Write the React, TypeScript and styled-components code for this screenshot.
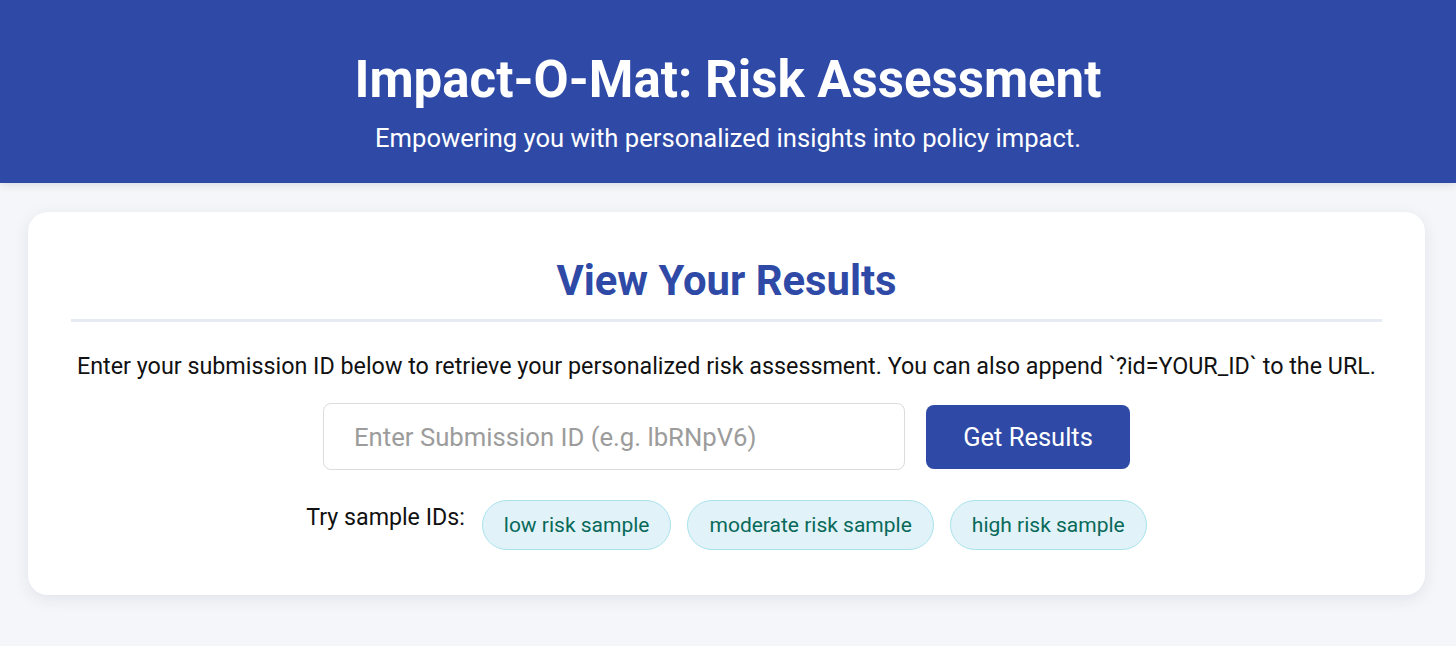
import React from "react";
import styled, { createGlobalStyle } from "styled-components";

const Global = createGlobalStyle`
  html, body { margin: 0; padding: 0; }
  body {
    background: #f5f6f9;
    font-family: Roboto, "Noto Sans", Arial, sans-serif;
    color: #111;
  }
`;

const Header = styled.header`
  background: #2e4aa6;
  color: #fff;
  text-align: center;
  height: 183px;
  box-sizing: border-box;
  padding-top: 49px;
  box-shadow: 0 2px 8px rgba(20, 30, 80, 0.12);
`;

const Title = styled.h1`
  margin: 0;
  font-size: 51px;
  font-weight: 700;
  line-height: 62px;
`;

const Subtitle = styled.p`
  margin: 11px 0 0;
  font-size: 25.6px;
  line-height: 32px;
  font-weight: 400;
`;

const Main = styled.main`
  padding: 29px 31px 40px 28px;
`;

const Card = styled.section`
  background: #fff;
  border-radius: 20px;
  box-shadow: 0 4px 16px rgba(30, 40, 90, 0.09);
  padding: 43px 43px 45px;
  display: flex;
  flex-direction: column;
  align-items: center;
`;

const CardTitle = styled.h2`
  margin: 0;
  font-size: 41.8px;
  font-weight: 700;
  line-height: 52px;
  color: #2e4aa6;
  align-self: stretch;
  text-align: center;
  padding-bottom: 12px;
  border-bottom: 3px solid #e6eaf2;
`;

const Intro = styled.p`
  margin: 30px 0 0;
  font-size: 23.3px;
  line-height: 28px;
  text-align: center;
  white-space: nowrap;
`;

const Form = styled.form`
  display: flex;
  gap: 21px;
  align-items: center;
  margin-top: 23px;
`;

const Input = styled.input`
  width: 582px;
  height: 67px;
  box-sizing: border-box;
  border: 1.5px solid #dcdcdc;
  border-radius: 8px;
  padding: 0 30px;
  font-family: inherit;
  font-size: 25.7px;
  color: #333;
  outline: none;
  &::placeholder { color: #9c9c9c; }
`;

const Button = styled.button`
  width: 204px;
  height: 64px;
  border: none;
  border-radius: 8px;
  background: #2e4aa6;
  color: #fff;
  font-family: inherit;
  font-size: 25.5px;
  cursor: pointer;
`;

const Samples = styled.div`
  display: flex;
  align-items: flex-start;
  gap: 17px;
  margin-top: 30px;
`;

const SampleLabel = styled.span`
  font-size: 23.2px;
  line-height: 28px;
  margin-top: 3px;
`;

const ChipGroup = styled.div`
  display: flex;
  gap: 16px;
`;

const Chip = styled.button`
  height: 50px;
  padding: 0 21px;
  border-radius: 25px;
  border: 1.5px solid #a8e2ec;
  background: #e1f3f8;
  color: #08695a;
  font-family: inherit;
  font-size: 21px;
  cursor: pointer;
`;

export default function App() {
  return (
    <>
      <Global />
      <Header>
        <Title>Impact-O-Mat: Risk Assessment</Title>
        <Subtitle>Empowering you with personalized insights into policy impact.</Subtitle>
      </Header>
      <Main>
        <Card>
          <CardTitle>View Your Results</CardTitle>
          <Intro>
            Enter your submission ID below to retrieve your personalized risk assessment. You can also append `?id=YOUR_ID` to the URL.
          </Intro>
          <Form onSubmit={(e) => e.preventDefault()}>
            <Input placeholder="Enter Submission ID (e.g. lbRNpV6)" />
            <Button type="submit">Get Results</Button>
          </Form>
          <Samples>
            <SampleLabel>Try sample IDs:</SampleLabel>
            <ChipGroup>
              <Chip type="button">low risk sample</Chip>
              <Chip type="button">moderate risk sample</Chip>
              <Chip type="button">high risk sample</Chip>
            </ChipGroup>
          </Samples>
        </Card>
      </Main>
    </>
  );
}
